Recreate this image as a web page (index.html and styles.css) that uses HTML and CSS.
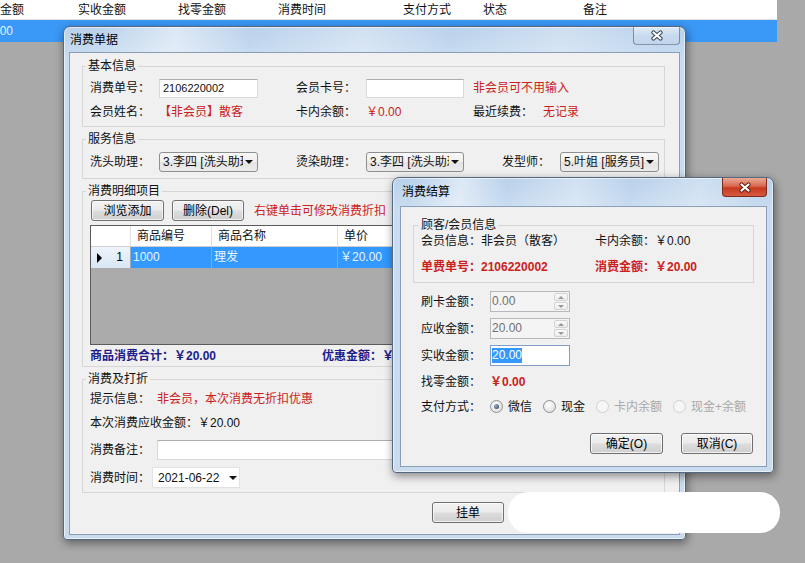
FILE: index.html
```html
<!DOCTYPE html>
<html lang="zh-CN">
<head>
<meta charset="utf-8">
<title>消费单据</title>
<link rel="stylesheet" href="styles.css">
</head>
<body>
<div class="list-head">
  <span class="lh lh-90 lh-cut">收金额</span>
  <span class="lh lh-100">实收金额</span>
  <span class="lh lh-100">找零金额</span>
  <span class="lh lh-125">消费时间</span>
  <span class="lh lh-80">支付方式</span>
  <span class="lh lh-100">状态</span>
  <span class="lh">备注</span>
</div>
<div class="list-sel"><span class="sel-cut">20.00</span></div>

<section class="win main-win">
  <header class="titlebar">
    <span class="title">消费单据</span>
    <span class="close"><svg width="14" height="11" viewBox="0 0 14 11"><path d="M3.5 2.5 L10.5 8.5 M10.5 2.5 L3.5 8.5" stroke="#34414f" stroke-width="4.2" stroke-linecap="round" fill="none"/><path d="M3.5 2.5 L10.5 8.5 M10.5 2.5 L3.5 8.5" stroke="#fff" stroke-width="2.2" stroke-linecap="round" fill="none"/></svg></span>
  </header>
  <div class="client main-client">
    <fieldset class="grp grp-main">
      <legend>基本信息</legend>
      <div class="row-basic">
        <span>消费单号：</span>
        <span class="tb"><span class="n">2106220002</span></span>
        <span class="at4">会员卡号：</span>
        <span class="tb"></span>
        <span class="at7-wide red">非会员可不用输入</span>
      </div>
      <div class="row-basic">
        <span>会员姓名：</span>
        <span class="red">【非会员】散客</span>
        <span class="at4">卡内余额：</span>
        <span class="red">￥0.00</span>
        <span class="at7">最近续费：</span>
        <span class="red">无记录</span>
      </div>
    </fieldset>

    <fieldset class="grp grp-main g2">
      <legend>服务信息</legend>
      <div class="row-service">
        <span>洗头助理：</span>
        <span class="combo"><span class="combo-text">3.李四 [洗头助理]</span><span class="arrow-box"><i class="arrow"></i></span></span>
        <span class="at4">烫染助理：</span>
        <span class="combo"><span class="combo-text">3.李四 [洗头助理]</span><span class="arrow-box"><i class="arrow"></i></span></span>
        <span class="at7">发型师：</span>
        <span class="combo"><span class="combo-text">5.叶姐 [服务员]</span><span class="arrow-box"><i class="arrow"></i></span></span>
      </div>
    </fieldset>

    <fieldset class="grp grp-main g3">
      <legend>消费明细项目</legend>
      <div class="btn-row">
        <span class="btn bw73">浏览添加</span>
        <span class="btn bw72 btn-del">删除(Del)</span>
        <span class="red hint">右键单击可修改消费折扣</span>
      </div>
      <div class="grid">
        <div class="g-head">
          <span class="g-rh"></span><span>商品编号</span><span>商品名称</span><span>单价</span><span>数量</span>
        </div>
        <div class="g-row">
          <span class="g-rh"><i class="ptr"></i>1</span><span>1000</span><span>理发</span><span>￥20.00</span><span>1</span>
        </div>
      </div>
      <div class="sum-row"><span class="sum1">商品消费合计：￥20.00</span><span>优惠金额：￥0.00</span></div>
    </fieldset>

    <fieldset class="grp grp-main g4">
      <legend>消费及打折</legend>
      <div class="mrow"><span class="lbl67">提示信息：</span><span class="red">非会员，本次消费无折扣优惠</span></div>
      <div class="mrow r2">本次消费应收金额：￥20.00</div>
      <div class="mrow r3"><span class="lbl67">消费备注：</span><span class="tb remark"></span></div>
      <div class="mrow r4"><span class="lbl62">消费时间：</span><span class="date">2021-06-22<i class="arrow"></i></span></div>
    </fieldset>

    <div class="main-actions"><span class="btn bw72">挂单</span></div>
  </div>
</section>

<section class="win pay-win">
  <header class="titlebar">
    <span class="title">消费结算</span>
    <span class="close close-red"><svg width="14" height="11" viewBox="0 0 14 11"><path d="M3.5 2.5 L10.5 8.5 M10.5 2.5 L3.5 8.5" stroke="#5a1d12" stroke-width="4.2" stroke-linecap="round" fill="none"/><path d="M3.5 2.5 L10.5 8.5 M10.5 2.5 L3.5 8.5" stroke="#fff" stroke-width="2.2" stroke-linecap="round" fill="none"/></svg></span>
  </header>
  <div class="client pay-client">
    <fieldset class="grp grp-pay">
      <legend>顾客/会员信息</legend>
      <div class="info-grid">
        <span>会员信息：非会员（散客）</span><span>卡内余额：￥0.00</span>
        <span class="red b">单费单号：2106220002</span><span class="red b">消费金额：￥20.00</span>
      </div>
    </fieldset>
    <div class="pay-form">
      <div class="frow"><span class="lbl69">刷卡金额：</span><span class="spin"><span class="spin-v">0.00</span><span class="spin-btns"><i class="up"></i><i class="dn"></i></span></span></div>
      <div class="frow"><span class="lbl69">应收金额：</span><span class="spin"><span class="spin-v">20.00</span><span class="spin-btns"><i class="up"></i><i class="dn"></i></span></span></div>
      <div class="frow"><span class="lbl69">实收金额：</span><span class="tb focus"><span class="hl">20.00</span></span></div>
      <div class="frow short"><span class="lbl69">找零金额：</span><span class="red b">￥0.00</span></div>
      <div class="frow short"><span class="lbl69">支付方式：</span>
        <span class="radios">
          <span class="radio"><i class="rb on"></i>微信</span>
          <span class="radio"><i class="rb"></i>现金</span>
          <span class="radio dis"><i class="rb"></i>卡内余额</span>
          <span class="radio dis"><i class="rb"></i>现金+余额</span>
        </span>
      </div>
      <div class="pay-btns"><span class="btn bw73">确定(O)</span><span class="btn bw72">取消(C)</span></div>
    </div>
  </div>
</section>

<div class="redact"></div>
</body>
</html>
```

FILE: styles.css
```css
* { box-sizing: border-box; }
html, body { margin: 0; padding: 0; }
body {
  position: relative;
  width: 805px;
  height: 563px;
  overflow: hidden;
  background: #a9a9a9;
  font-family: "Liberation Sans", "Noto Sans CJK SC", sans-serif;
  font-size: 12px;
  line-height: 14px;
  color: #111;
}

/* background list */
.list-head {
  display: flex;
  align-items: center;
  width: 777px;
  height: 20px;
  background: #fff;
  border-bottom: 1px solid #e2e2e2;
  white-space: nowrap;
  overflow: hidden;
}
.lh { flex: none; }
.lh-cut { margin-left: -12px; }
.lh-90 { width: 90px; }
.lh-100 { width: 100px; }
.lh-125 { width: 125px; }
.lh-80 { width: 80px; }
.list-sel {
  display: flex;
  align-items: center;
  width: 777px;
  height: 22px;
  background: #3a98f6;
  color: #e8f2ff;
  overflow: hidden;
  white-space: nowrap;
}
.sel-cut { margin-left: -17px; }

/* windows */
.win {
  position: absolute;
  display: flex;
  flex-direction: column;
  border: 1px solid #55687f;
  border-radius: 7px 7px 4px 4px;
  background:
    linear-gradient(100deg, rgba(255,255,255,0) 5%, rgba(255,255,255,.5) 18%, rgba(255,255,255,0) 30%, rgba(255,255,255,.35) 48%, rgba(255,255,255,0) 62%, rgba(255,255,255,.3) 80%, rgba(255,255,255,0) 95%) top / 100% 40px no-repeat,
    linear-gradient(180deg, #b9d1eb 0, #c9dcf0 30px, #cadbed 100%);
  box-shadow: 1px 3px 10px rgba(0,0,0,.45), inset 0 0 0 1px rgba(255,255,255,.55);
}
.main-win { left: 63px; top: 26px; width: 623px; height: 514px; padding: 0 5px 4px 5px; }
.pay-win { left: 392px; top: 177px; width: 382px; height: 296px; padding: 0 6px 5px 7px; }

.titlebar { display: flex; align-items: center; flex: none; }
.main-win .titlebar { height: 25px; }
.pay-win .titlebar { height: 28px; }
.main-win .title { padding-left: 1px; }
.pay-win .title { padding-left: 2px; }
.title { color: #000; }

.close {
  margin-left: auto;
  align-self: flex-start;
  display: flex;
  align-items: center;
  justify-content: center;
  border: 1px solid rgba(70,90,120,.6);
  border-top: none;
  border-radius: 0 0 4px 4px;
  background: linear-gradient(rgba(255,255,255,.55), rgba(214,227,242,.4) 50%, rgba(190,208,230,.5));
}
.main-win .close { width: 47px; height: 18px; }
.close-red {
  width: 45px;
  height: 19px;
  background: linear-gradient(#eba996, #d9694f 45%, #c7391f 55%, #d65a3f);
  border-color: #7b2c1e;
}

.client {
  flex: 1;
  background: #f0f0f0;
  border: 1px solid #8a9eb5;
}
.main-client { padding: 6px 14px 0 12px; }
.pay-client { padding: 11px 12px 0 12px; }

/* group boxes */
.grp { margin: 0; padding: 0; border: 1px solid #d6d6d6; min-width: 0; }
.grp legend { padding: 0 2px; line-height: 14px; }
.grp-main { width: 583px; padding: 5px 0 4px 7px; }
.grp-main legend { margin-left: -4px; }
.g2 { margin-top: 5px; padding-top: 6px; padding-bottom: 6px; }
.g3 { margin-top: 5px; padding-top: 2px; padding-bottom: 3px; }
.g4 { margin-top: 5px; padding-top: 5px; padding-bottom: 4px; }

.red { color: #cc2020; }
.b { font-weight: bold; }

.row-basic {
  display: grid;
  grid-template-columns: 69px 99px 38px 70px 98px 9px 70px 1fr;
  align-items: center;
  height: 20px;
  white-space: nowrap;
}
.row-basic + .row-basic { margin-top: 4px; }
.row-service {
  display: grid;
  grid-template-columns: 69px 99px 38px 70px 98px 38px 58px 99px;
  align-items: center;
  height: 20px;
  white-space: nowrap;
}
.at4 { grid-column: 4; }
.at7 { grid-column: 7; }
.at7-wide { grid-column: 7 / span 2; }

.tb {
  display: flex;
  align-items: center;
  height: 19px;
  background: #fff;
  border: 1px solid #d5d9dd;
  border-top-color: #abadb3;
  padding-left: 3px;
  white-space: nowrap;
}
.n { font-size: 11px; }

.combo {
  display: flex;
  align-items: center;
  height: 20px;
  border: 1px solid #8e8f8f;
  border-radius: 3px;
  background: linear-gradient(#f8f8f8, #efefef 50%, #e3e3e3 51%, #ebebeb);
  overflow: hidden;
}
.combo-text { flex: 1; min-width: 0; overflow: hidden; white-space: nowrap; padding-left: 3px; }
.arrow-box { width: 12px; margin-right: 2px; display: flex; justify-content: center; }
.arrow {
  display: block;
  width: 0;
  height: 0;
  border-left: 4px solid transparent;
  border-right: 4px solid transparent;
  border-top: 4px solid #111;
}

/* buttons */
.btn {
  display: flex;
  align-items: center;
  justify-content: center;
  height: 21px;
  border: 1px solid #707070;
  border-radius: 3px;
  background: linear-gradient(#f2f2f2 0, #ebebeb 48%, #dddddd 52%, #cfcfcf 100%);
  box-shadow: inset 0 0 0 1px rgba(255,255,255,.7);
  white-space: nowrap;
  color: #000;
}
.bw73 { width: 73px; }
.bw72 { width: 72px; }

.btn-row { display: flex; align-items: center; height: 21px; }
.btn-row .btn:first-child { margin-left: 1px; }
.btn-del { margin-left: 8px; }
.hint { margin-left: 10px; white-space: nowrap; }

/* data grid */
.grid {
  width: 568px;
  height: 120px;
  margin-top: 4px;
  border: 1px solid #5b5b5b;
  background: #ababab;
  overflow: hidden;
}
.g-head, .g-row {
  display: grid;
  grid-template-columns: 40px 81px 126px 80px 1fr;
  white-space: nowrap;
}
.g-head { height: 21px; background: #fff; border-bottom: 1px solid #cfcfcf; }
.g-head span { border-right: 1px solid #e0e0e0; padding-left: 6px; line-height: 20px; }
.g-row { height: 21px; background: #3399ff; color: #eaf4ff; }
.g-row span { padding-left: 2px; line-height: 21px; border-right: 1px solid #66b0ff; }
.g-row .g-rh {
  display: flex;
  align-items: center;
  justify-content: space-between;
  padding: 0 7px 0 6px;
  background: linear-gradient(#eef4fb, #d9e6f5);
  color: #000;
  border-right: 1px solid #9aa9bb;
}
.ptr {
  display: block;
  width: 0;
  height: 0;
  border-top: 5px solid transparent;
  border-bottom: 5px solid transparent;
  border-left: 5px solid #000;
}

.sum-row {
  display: flex;
  align-items: center;
  height: 15px;
  margin-top: 3px;
  color: #1c1c8c;
  font-weight: bold;
  white-space: nowrap;
}
.sum1 { width: 232px; flex: none; }

.mrow { display: flex; align-items: center; height: 16px; white-space: nowrap; }
.mrow.r2 { margin-top: 8px; }
.mrow.r3 { margin-top: 9px; height: 20px; }
.mrow.r4 { margin-top: 7px; height: 21px; }
.lbl67 { width: 67px; flex: none; }
.lbl62 { width: 62px; flex: none; }
.remark { width: 420px; height: 20px; }
.date {
  display: flex;
  align-items: center;
  width: 88px;
  height: 21px;
  background: #fff;
  border: 1px solid #e2e2e2;
  padding-left: 5px;
}
.date .arrow { margin-left: auto; margin-right: 2px; }

.main-actions { display: flex; margin-top: 9px; padding-left: 350px; }

/* pay dialog */
.grp-pay { width: 341px; padding: 2px 0 8px 7px; }
.grp-pay legend { margin-left: -2px; }
.info-grid {
  display: grid;
  grid-template-columns: 174px 1fr;
  grid-auto-rows: 14px;
  row-gap: 12px;
  white-space: nowrap;
}
.pay-form { padding: 8px 1px 0 8px; }
.frow { display: flex; align-items: center; height: 21px; white-space: nowrap; }
.frow + .frow { margin-top: 6px; }
.frow.short { height: 19px; }
.lbl69 { width: 69px; flex: none; }

.spin {
  display: flex;
  width: 80px;
  height: 21px;
  border: 1px solid #b5b9bd;
  background: #f4f4f4;
}
.spin-v { flex: 1; padding-left: 1px; color: #707070; line-height: 19px; }
.spin-btns { display: flex; flex-direction: column; width: 16px; padding: 1px; gap: 1px; }
.spin-btns i {
  flex: 1;
  display: flex;
  align-items: center;
  justify-content: center;
  border: 1px solid #d2d2d2;
  border-radius: 2px;
  background: linear-gradient(#fafafa, #ececec);
}
.up::after {
  content: "";
  border-left: 3px solid transparent;
  border-right: 3px solid transparent;
  border-bottom: 3px solid #9a9a9a;
}
.dn::after {
  content: "";
  border-left: 3px solid transparent;
  border-right: 3px solid transparent;
  border-top: 3px solid #9a9a9a;
}
.tb.focus { width: 80px; height: 21px; border: 1px solid #7f9fc8; padding-left: 1px; }
.hl { background: #3399ff; color: #fff; line-height: 15px; }

.radios { display: flex; align-items: center; gap: 11px; }
.radio { display: flex; align-items: center; gap: 5px; }
.rb {
  display: block;
  width: 13px;
  height: 13px;
  border-radius: 50%;
  border: 1px solid #8e8f8f;
  background: radial-gradient(circle at 40% 35%, #fff, #d8d8d8);
}
.rb.on::after {
  content: "";
  display: block;
  width: 5px;
  height: 5px;
  margin: 3px;
  border-radius: 50%;
  background: radial-gradient(circle at 35% 35%, #9fb3c8, #22364f);
}
.radio.dis { color: #a8a8a8; }
.radio.dis .rb { border-color: #d0d0d0; background: #f6f6f6; }

.pay-btns { display: flex; justify-content: flex-end; gap: 18px; margin-top: 17px; }

.redact {
  position: absolute;
  left: 508px;
  top: 492px;
  width: 272px;
  height: 41px;
  border-radius: 20px;
  background: #fff;
}
```
